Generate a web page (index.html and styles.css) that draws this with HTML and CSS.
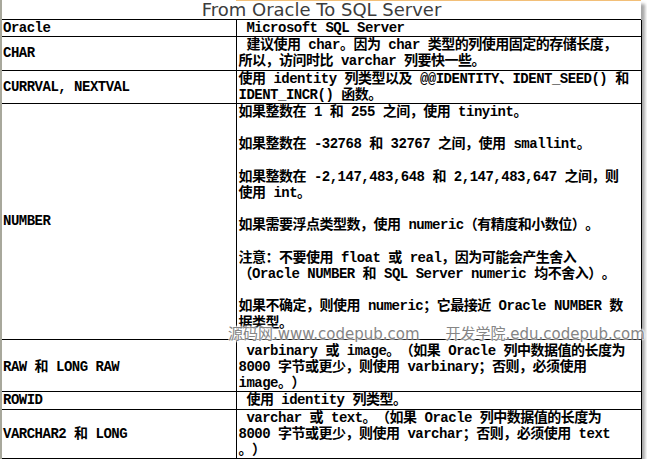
FILE: index.html
```html
<!DOCTYPE html>
<html lang="zh-CN">
<head>
    <meta charset="UTF-8">
    <title>From Oracle To SQL Server</title>
    <link rel="stylesheet" href="styles.css">
</head>
<body>
    <div class="sheet">
        <div class="title">From Oracle To SQL Server</div>
        <table class="grid">
            <colgroup>
                <col class="col-ora">
                <col class="col-sql">
            </colgroup>
            <tr class="head">
                <td>Oracle</td>
                <td> Microsoft SQL Server</td>
            </tr>
            <tr>
                <td>CHAR</td>
                <td> 建议使用 char。因为 char 类型的列使用固定的存储长度，<br>所以，访问时比 varchar 列要快一些。</td>
            </tr>
            <tr>
                <td>CURRVAL, NEXTVAL</td>
                <td>使用 identity 列类型以及 @@IDENTITY、IDENT_SEED() 和<br>IDENT_INCR() 函数。</td>
            </tr>
            <tr class="number">
                <td>NUMBER</td>
                <td>如果整数在 1 和 255 之间，使用 tinyint。<br><br>如果整数在 -32768 和 32767 之间，使用 smallint。<br><br>如果整数在 -2,147,483,648 和 2,147,483,647 之间，则<br>使用 int。<br><br>如果需要浮点类型数，使用 numeric（有精度和小数位）。<br><br>注意：不要使用 float 或 real，因为可能会产生舍入<br>（Oracle NUMBER 和 SQL Server numeric 均不舍入）。<br><br>如果不确定，则使用 numeric；它最接近 Oracle NUMBER 数<br>据类型。</td>
            </tr>
            <tr class="raw">
                <td>RAW 和 LONG RAW</td>
                <td> varbinary 或 image。（如果 Oracle 列中数据值的长度为<br>8000 字节或更少，则使用 varbinary；否则，必须使用<br>image。）</td>
            </tr>
            <tr>
                <td>ROWID</td>
                <td> 使用 identity 列类型。</td>
            </tr>
            <tr>
                <td>VARCHAR2 和 LONG</td>
                <td> varchar 或 text。（如果 Oracle 列中数据值的长度为<br>8000 字节或更少，则使用 varchar；否则，必须使用 text<br>。）</td>
            </tr>
        </table>
        <div class="watermark"><span>源码网.www.codepub.com</span><span>开发学院.edu.codepub.com</span></div>
    </div>
</body>
</html>
```

FILE: styles.css
```css
body {
    margin: 0;
    background-color: #ffffff;
}
.sheet {
    position: relative;
    width: 639px;
    border-left: 2px solid #a8a89c;
    box-shadow: 4px 4px 3px rgba(0, 0, 0, 0.35);
}
.title {
    position: relative;
    height: 20px;
    line-height: 20px;
    text-align: center;
    font-family: "DejaVu Sans", Verdana, sans-serif;
    font-size: 18px;
    color: #3c3c3c;
    border-bottom: 1px solid #000000;
    box-sizing: border-box;
}
/* thin orange edge over the right half of the title */
.title::after {
    content: "";
    position: absolute;
    left: 234px;
    right: 0;
    top: 0;
    height: 1px;
    background-color: #f2bf78;
}
.grid {
    width: 640px;
    border-collapse: collapse;
    table-layout: fixed;
    font-family: "Liberation Mono", "Noto Sans CJK SC", monospace;
    font-size: 14px;
    font-weight: bold;
    letter-spacing: -0.5px;
    line-height: 16.2px;
    color: #000000;
    text-spacing-trim: space-all;
}
.col-ora {
    width: 234px;
}
.grid td {
    border: 1px solid #000000;
    padding: 0 2px;
    vertical-align: middle;
    white-space: pre;
}
.grid td:first-child {
    border-left: none;
    padding-left: 1px;
}
.grid tr:first-child td {
    border-top: none;
}
.number td {
    padding-bottom: 8px;
}
.number td:first-child {
    padding-bottom: 0;
}
.raw td {
    padding-top: 3px;
}
.watermark {
    position: absolute;
    left: 226px;
    top: 322px;
    width: 421px;
    white-space: nowrap;
    overflow: hidden;
    font-family: "DejaVu Sans", "Noto Sans CJK SC", sans-serif;
    font-size: 15px;
    color: #858585;
    text-shadow: 0 0 2px #ffffff, 0 0 2px #ffffff, 0 0 3px #ffffff, 0 0 3px #ffffff;
}
.watermark span + span {
    margin-left: 26px;
}
```
